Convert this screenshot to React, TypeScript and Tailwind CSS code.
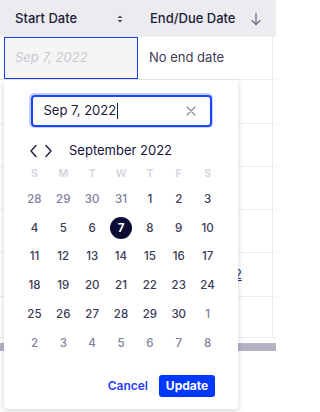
import React from "react";

const weekdays = ["S", "M", "T", "W", "T", "F", "S"];
const weeks: { d: number; cur: boolean }[][] = [
  [28, 29, 30, 31].map((d) => ({ d, cur: false })).concat([1, 2, 3].map((d) => ({ d, cur: true }))),
  [4, 5, 6, 7, 8, 9, 10].map((d) => ({ d, cur: true })),
  [11, 12, 13, 14, 15, 16, 17].map((d) => ({ d, cur: true })),
  [18, 19, 20, 21, 22, 23, 24].map((d) => ({ d, cur: true })),
  [25, 26, 27, 28, 29, 30].map((d) => ({ d, cur: true })).concat([{ d: 1, cur: false }]),
  [2, 3, 4, 5, 6, 7, 8].map((d) => ({ d, cur: false })),
];

function SortIcon() {
  return (
    <svg width="8" height="10" viewBox="0 0 8 10" className="text-[#4a4a60]">
      <path d="M4 1.5 L6.5 4 L1.5 4 Z" fill="currentColor" />
      <path d="M4 8.5 L6.5 6 L1.5 6 Z" fill="currentColor" />
    </svg>
  );
}

function ArrowDown() {
  return (
    <svg width="12" height="14" viewBox="0 0 12 14" fill="none" stroke="#6b6b80" strokeWidth="1.3" strokeLinecap="round" strokeLinejoin="round">
      <path d="M6 1.5 V12.5" />
      <path d="M2 8.5 L6 12.5 L10 8.5" />
    </svg>
  );
}

function Row({ children, h = "h-[43.3px]" }: { children?: React.ReactNode; h?: string }) {
  return (
    <div className={`flex ${h} border-b border-[#ececf0]`}>
      <div className="w-[4px]" />
      <div className="w-[134px] flex items-center" />
      <div className="w-[135px] flex items-center pl-[11px] border-r border-[#ececf0] text-[13px] text-[#3c3c58] whitespace-nowrap overflow-hidden">
        {children}
      </div>
    </div>
  );
}

export default function App() {
  return (
    <div className="relative w-[276px] h-[412px] overflow-hidden bg-white font-['Inter',sans-serif]">
      {/* header */}
      <div className="flex h-[37px] bg-[#ebebf0]">
        <div className="w-[4px]" />
        <div className="w-[134px] flex items-center justify-between pl-[11px] pr-[14px] text-[13px] font-medium text-[#1d1d3b]">
          <span>Start Date</span>
          <SortIcon />
        </div>
        <div className="w-[135px] flex items-center justify-between pl-[12px] pr-[11px] text-[13px] font-medium text-[#1d1d3b]">
          <span>End/Due Date</span>
          <ArrowDown />
        </div>
      </div>
      {/* first row with selected cell */}
      <div className="flex h-[43.3px] border-b border-[#ececf0]">
        <div className="w-[4px]" />
        <div className="w-[134px] flex items-center pl-[10px] bg-[#f5f5f6] border border-[#1a3fe8] text-[13px] italic text-[#c9c9d3]">
          Sep 7, 2022
        </div>
        <div className="w-[135px] flex items-center pl-[11px] border-r border-[#ececf0] text-[13px] text-[#3c3c58]">
          No end date
        </div>
      </div>
      <Row />
      <Row />
      <Row />
      <Row />
      <Row>
        <span className="underline text-[#2b2b70] pl-[10px]">Sep 30, 2022</span>
      </Row>
      <Row h="h-[41.7px]" />
      <div className="h-[5px]" />
      <div className="h-[8px] bg-[#b4b3c4]" />

      {/* popup */}
      <div className="absolute left-[4px] top-[80px] w-[234px] h-[329px] bg-white rounded-b-[4px] shadow-[0_2px_6px_rgba(20,20,60,0.18)] flex flex-col items-center">
        <div className="mt-[13px] w-[184px] h-[35px] rounded-[5px] p-[1.5px] bg-[#c7d1ff]">
          <div className="w-full h-full rounded-[4px] border-2 border-[#1a45ff] bg-white flex items-center pl-[11px] pr-[14px] justify-between">
            <span className="text-[13px] text-[#1c1c3a] flex items-center">
              Sep 7, 2022<span className="inline-block w-[1px] h-[16px] bg-[#1c1c3a] ml-[1px]" />
            </span>
            <svg width="10" height="10" viewBox="0 0 10 10" stroke="#8a8a9c" strokeWidth="1.2" strokeLinecap="round">
              <path d="M1 1 L9 9 M9 1 L1 9" />
            </svg>
          </div>
        </div>
        <div className="w-[208px] mt-[13px] flex items-center h-[20px] pl-[12px]">
          <svg width="9" height="14" viewBox="0 0 9 14" fill="none" stroke="#1d1d3b" strokeWidth="1.4" strokeLinecap="round" strokeLinejoin="round">
            <path d="M7 1.5 L2 7 L7 12.5" />
          </svg>
          <svg width="9" height="14" viewBox="0 0 9 14" fill="none" stroke="#1d1d3b" strokeWidth="1.4" strokeLinecap="round" strokeLinejoin="round" className="ml-[6px]">
            <path d="M2 1.5 L7 7 L2 12.5" />
          </svg>
          <span className="ml-[16px] text-[13px] text-[#14143a]">September 2022</span>
        </div>
        <div className="w-[202px] mt-[1px] grid grid-cols-7">
          {weekdays.map((w, i) => (
            <div key={i} className="h-[24px] flex items-center justify-center text-[10.5px] font-semibold text-[#d3d3dc]">
              {w}
            </div>
          ))}
        </div>
        <div className="w-[202px] mt-[-1px] grid grid-cols-7">
          {weeks.flat().map((c, i) => {
            const sel = c.cur && c.d === 7;
            return (
              <div key={i} className="h-[28.8px] flex items-center justify-center">
                {sel ? (
                  <div className="w-[22px] h-[22px] rounded-full bg-[#0b0b36] flex items-center justify-center text-[11.5px] font-bold text-white">
                    {c.d}
                  </div>
                ) : (
                  <span className={`text-[11.5px] font-medium ${c.cur ? "text-[#3a3a55]" : "text-[#80809a]"}`}>{c.d}</span>
                )}
              </div>
            );
          })}
        </div>
        <div className="mt-auto mb-[12px] w-[188px] flex items-center justify-end gap-[11px]">
          <span className="text-[12px] font-semibold text-[#2c3cff]">Cancel</span>
          <div className="w-[56px] h-[22px] rounded-[3px] bg-[#0038ff] flex items-center justify-center text-[12px] font-bold text-white">
            Update
          </div>
        </div>
      </div>
    </div>
  );
}
